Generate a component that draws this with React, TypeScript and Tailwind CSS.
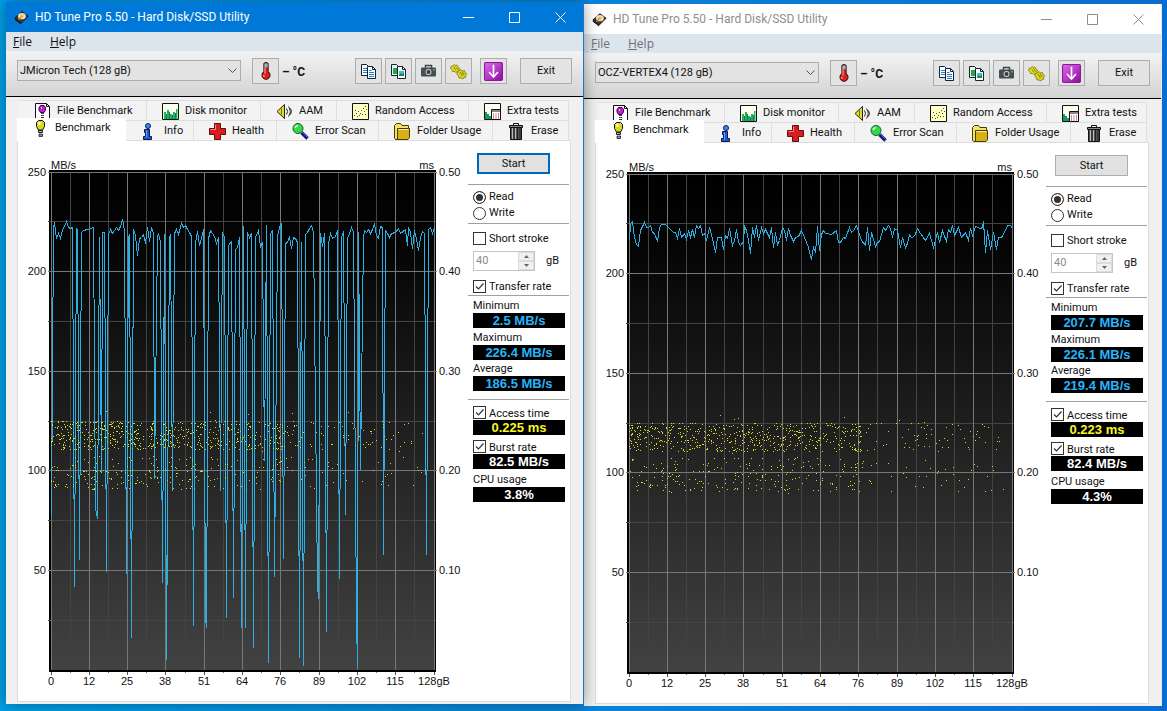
import { useId } from 'react';
import type { ReactNode } from 'react';
import clsx from 'clsx';

type Point = [number, number];

// Plot area in chart units: 384 wide (0-128 gB), 498 high (250-0 MB/s)
const PLOT_W = 384;
const PLOT_H = 498;

const X_LABELS = ['0', '12', '25', '38', '51', '64', '76', '89', '102', '115', '128gB'];
const X_MAJOR = [0, 38, 76, 114, 153, 191, 229, 268, 306, 344, 383];
const X_MINOR = [19, 57, 95, 134, 172, 210, 248, 287, 325, 363];
const Y_LABELS = [
  { y: 0, speed: '250', time: '0.50' },
  { y: 99, speed: '200', time: '0.40' },
  { y: 199, speed: '150', time: '0.30' },
  { y: 298, speed: '100', time: '0.20' },
  { y: 398, speed: '50', time: '0.10' },
];
const Y_MINOR = [49, 149, 249, 348, 448];

const JMICRON_TRACE: Point[] = [
  [0, 344], [2, 56], [3, 50], [5, 66], [7, 61], [9, 66], [11, 57], [13, 54], [15, 49], [17, 55], [19, 56], [21, 55],
  [23, 414], [25, 56], [26, 58], [28, 387], [30, 60], [32, 58], [36, 57], [42, 55], [44, 336], [46, 346], [48, 65],
  [50, 300], [51, 60], [53, 60], [55, 399], [57, 62], [59, 57], [61, 61], [63, 58], [65, 55], [67, 58], [69, 54],
  [71, 47], [73, 58], [75, 401], [77, 65], [78, 62], [80, 465], [82, 57], [84, 63], [86, 83], [88, 66], [90, 65],
  [92, 62], [94, 71], [96, 55], [98, 69], [100, 55], [102, 61], [103, 306], [106, 65], [107, 61], [109, 70],
  [111, 410], [113, 62], [115, 487], [118, 65], [119, 62], [121, 318], [123, 61], [125, 57], [127, 62], [128, 58],
  [130, 51], [132, 55], [134, 53], [136, 57], [138, 60], [140, 64], [142, 453], [144, 70], [146, 59], [148, 73],
  [150, 66], [152, 57], [154, 445], [155, 455], [157, 66], [159, 58], [161, 61], [163, 64], [165, 71], [167, 65],
  [169, 318], [171, 60], [173, 65], [175, 445], [177, 73], [180, 69], [182, 425], [184, 77], [186, 75], [188, 65],
  [190, 455], [192, 54], [194, 455], [196, 60], [198, 65], [200, 61], [202, 475], [204, 65], [207, 58], [209, 74],
  [211, 70], [213, 288], [215, 53], [217, 490], [219, 61], [221, 58], [223, 404], [226, 64], [228, 55], [230, 51],
  [232, 386], [234, 71], [236, 70], [238, 64], [240, 76], [242, 65], [244, 66], [246, 70], [248, 485], [250, 70],
  [252, 493], [254, 62], [256, 60], [258, 56], [260, 53], [262, 60], [266, 413], [267, 426], [269, 61], [271, 74],
  [273, 61], [275, 459], [277, 71], [279, 61], [281, 66], [284, 64], [286, 58], [288, 406], [290, 65], [292, 59],
  [294, 342], [296, 66], [298, 61], [300, 55], [302, 60], [305, 448], [306, 494], [307, 60], [309, 297], [312, 65],
  [313, 58], [315, 60], [317, 57], [319, 61], [321, 57], [323, 51], [325, 63], [327, 66], [329, 54], [331, 55],
  [332, 382], [334, 58], [336, 61], [338, 65], [340, 61], [344, 60], [347, 56], [349, 61], [354, 57], [356, 73],
  [357, 55], [359, 60], [361, 76], [363, 58], [365, 66], [367, 78], [369, 65], [371, 59], [373, 61], [375, 382],
  [377, 57], [379, 55], [381, 61], [383, 55],
];

const VERTEX_TRACE: Point[] = [
  [0, 66], [1, 49], [3, 47], [5, 63], [7, 70], [9, 72], [11, 56], [13, 52], [15, 48], [17, 53], [19, 53], [21, 51],
  [23, 58], [25, 59], [28, 67], [30, 53], [32, 50], [36, 50], [40, 54], [44, 58], [46, 58], [48, 64], [50, 54],
  [52, 63], [55, 59], [57, 65], [59, 56], [61, 63], [63, 55], [65, 63], [67, 51], [69, 54], [71, 51], [73, 61],
  [75, 59], [77, 66], [80, 53], [83, 64], [86, 78], [88, 63], [92, 63], [94, 75], [96, 61], [98, 64], [100, 54],
  [103, 71], [105, 66], [107, 55], [109, 68], [111, 71], [114, 67], [115, 52], [117, 56], [119, 66], [121, 79],
  [123, 53], [125, 63], [127, 51], [129, 66], [132, 53], [134, 59], [136, 55], [138, 59], [140, 63], [142, 53],
  [144, 73], [146, 58], [148, 70], [150, 66], [153, 53], [155, 56], [157, 66], [159, 54], [161, 61], [164, 67],
  [166, 63], [169, 62], [172, 56], [175, 63], [177, 68], [179, 73], [182, 85], [184, 73], [186, 78], [188, 52],
  [190, 76], [192, 60], [194, 56], [196, 59], [202, 60], [207, 56], [209, 68], [211, 68], [214, 63], [216, 64],
  [220, 53], [222, 58], [224, 56], [227, 51], [230, 60], [232, 66], [236, 71], [238, 53], [240, 76], [242, 58],
  [246, 72], [248, 68], [250, 67], [254, 53], [256, 56], [259, 51], [261, 54], [263, 63], [265, 54], [268, 56],
  [271, 73], [273, 63], [276, 73], [278, 69], [280, 60], [282, 63], [285, 62], [288, 54], [291, 59], [296, 66],
  [300, 59], [304, 73], [306, 66], [308, 58], [310, 68], [313, 56], [317, 67], [319, 55], [321, 58], [323, 51],
  [325, 61], [329, 53], [332, 63], [336, 58], [339, 66], [341, 54], [343, 61], [346, 52], [351, 54], [353, 53],
  [354, 47], [356, 78], [358, 56], [361, 75], [364, 58], [367, 75], [369, 63], [372, 63], [375, 58], [378, 51],
  [381, 51], [383, 54],
];

// Access time samples: a dense band above 0.20 ms and a looser one around it
function accessSamples(seed: number): Point[] {
  let state = seed;
  const next = () => {
    state = (state * 48271) % 2147483647;
    return state / 2147483647;
  };
  const column = () => {
    const u = next();
    if (u < 0.76) return Math.floor(Math.pow(u / 0.76, 1.15) * 192);
    if (u < 0.86) return Math.floor(192 + next() * 40);
    return Math.floor(225 + Math.pow(next(), 1.5) * 150);
  };
  const points: Point[] = [];
  for (let i = 0; i < 620; i++) points.push([column(), Math.floor(249 + next() * 29)]);
  for (let i = 0; i < 250; i++) points.push([column(), Math.floor(284 + next() * 34)]);
  for (let i = 0; i < 40; i++) points.push([column(), Math.floor(238 + next() * 82)]);
  return points;
}

const JMICRON_ACCESS = accessSamples(4711);
const VERTEX_ACCESS = accessSamples(90210);

/* ---------- icons ---------- */

function Icon({ children, className = 'size-[17px]' }: { children: ReactNode; className?: string }) {
  return (
    <svg viewBox="0 0 17 17" className={clsx('shrink-0', className)} aria-hidden="true">
      {children}
    </svg>
  );
}

const BulbIcon = () => (
  <Icon>
    <path d="M6.500.5h4l2 2v4l-2 3.500h-4L4.500 6.500v-4z" fill="#d8d820" stroke="#111" />
    <path d="M6.500 2h2v3h-2z" fill="#ffffc0" />
    <path d="M6.500 10.500h4v2h-4z" fill="#b0b0b0" stroke="#222" />
    <path d="M7 14h3.500v2.500H7z" fill="#888" stroke="#222" strokeWidth=".8" />
  </Icon>
);

const FileBenchIcon = () => (
  <Icon>
    <path d="M1.500.5h11l3 3v13h-14z" fill="#fff" stroke="#111" />
    <path d="M12.500.5v3h3" fill="none" stroke="#111" />
    <path d="M6.500 2.500h3.500l1.500 2v2.500l-1.500 2.500H6.500L5 7V4.500z" fill="#c020c8" stroke="#400050" />
    <path d="M7 4h1v2H7z" fill="#f8b0f8" />
    <path d="M7 10.500h3M7 12.500h3" stroke="#444" />
    <path d="M7 14h3v1.500H7z" fill="#333" />
  </Icon>
);

const MonitorIcon = () => (
  <Icon>
    <path d="M.5.5h16v16H.5z" fill="#fbfff0" stroke="#111" />
    <path d="M2 9h2v7H2zM5 7h2v9H5zM8 11h2v5H8zM11 9h2v7h-2zM14 6h1.500v10H14z" fill="#25b34b" />
    <path d="M4 11h1v5H4zM7 9h1v7H7zM10 12h1v4h-1zM13 10h1v6h-1z" fill="#087878" />
  </Icon>
);

const SpeakerIcon = () => (
  <Icon>
    <path d="m1 8.500 7.500-7v14z" fill="#e2dc20" stroke="#222" strokeLinejoin="round" />
    <path d="M5.500 5.500v6" stroke="#777700" />
    <path d="M10.500 5.500q2 3 0 6M12.500 3.500q3.500 5 0 10M14.500 5.500q2 3 0 6" fill="none" stroke="#222" />
  </Icon>
);

const ScatterIcon = () => (
  <Icon>
    <path d="M.5.5h16v16H.5z" fill="#ffffc8" stroke="#111" />
    <path
      d="M2 12h1v1H2zM4 10h1v1H4zM5 13h1v1H5zM6 8h1v1H6zM8 10h1v1H8zM9 7h1v1H9zM10 11h1v1h-1zM11 5h1v1h-1zM12 8h1v1h-1zM13 3h1v1h-1zM14 6h1v1h-1zM7 12h1v1H7zM3 7h1v1H3zM13 11h1v1h-1z"
      fill="#554c00"
    />
  </Icon>
);

const ExtraIcon = () => (
  <Icon>
    <path d="M.5.5h16v16H.5z" fill="#fbfff0" stroke="#111" />
    <path d="M1 9h2v7H1zM3 11h2v5H3zM5 13h2v3H5z" fill="#159a60" />
    <path d="M7.500 6.500h9v10h-9z" fill="#fff" stroke="#111" />
    <path d="M8 7h8v2H8z" fill="#888" />
    <path d="M9 11h1M11.500 11h1M14 11h1M9 13h1M11.500 13h1M14 13h1M9 15h1M11.500 15h1M14 15h1" stroke="#b01030" strokeWidth="1.200" />
  </Icon>
);

const InfoIcon = () => (
  <Icon>
    <circle cx="7" cy="3" r="2.500" fill="#3a8af0" stroke="#0a1a60" />
    <path d="M3.500 6.500h5v7h2v3h-8v-3h2v-4h-1z" fill="#1858d8" stroke="#0a1a50" />
    <path d="M5.500 7.500v7" stroke="#68a8ff" />
  </Icon>
);

const HealthIcon = () => (
  <Icon>
    <path d="M5.500.5h6v5h5v6h-5v5h-6v-5h-5v-6h5z" fill="#d81c20" stroke="#5c1010" />
    <path d="M6.500 1.500v5h-5" fill="none" stroke="#ff8080" />
  </Icon>
);

const ScanIcon = () => (
  <Icon>
    <path d="m9.500 9.500 6 6" stroke="#101870" strokeWidth="3.500" />
    <path d="m10 9 5.500 5.500" stroke="#4860d0" />
    <circle cx="6" cy="5.500" r="5" fill="#35d64c" stroke="#176028" />
    <path d="M3 5q.5-2 3-2.500" fill="none" stroke="#c8ffc8" strokeWidth="1.500" />
  </Icon>
);

const FolderIcon = () => (
  <Icon>
    <path d="M.5 15V2.500l2-2h4l1.500 2h6.500v12l-2 2h-11z" fill="#f5e070" stroke="#443c00" />
    <path d="M3.500 5.500h12v9l-1.500 2h-10.500z" fill="#d8b018" stroke="#443c00" />
    <path d="M4.500 6.500h10" stroke="#fff090" />
  </Icon>
);

const TrashIcon = () => (
  <Icon>
    <path d="M5.500 2V.5h5V2" fill="none" stroke="#111" />
    <path d="M1.500 2.500h13v2h-13z" fill="#888" stroke="#111" />
    <path d="M2.500 4.500h11v12h-11z" fill="#555" stroke="#111" />
    <path d="M4.500 5v11M7.500 5v11" stroke="#bbb" />
    <path d="M6 5v11M9.500 5v11M12 5v11" stroke="#222" />
  </Icon>
);

const ThermometerIcon = () => (
  <Icon className="size-[18px]">
    <path d="M6.500 1.500q2-2 4 0v8q2.500 1.500 1.500 4.500-1.500 2.500-3.500 2.500T5 14q-1-3 1.500-4.500z" fill="#d82020" stroke="#501010" />
    <path d="M7 1.500h3V5H7z" fill="#60d0d8" />
    <path d="M7.500 5v6" stroke="#ff9a9a" />
    <path d="M6.500 12.500v1.500" stroke="#fff" />
  </Icon>
);

const CopyTextIcon = () => (
  <Icon>
    <path d="M1.500 1.500h5l2 2v9h-7z" fill="#fff" stroke="#123" />
    <path d="M3 5.500h4M3 7.500h4M3 9.500h4" stroke="#2080d8" />
    <path d="M7.500 3.500h5l3 3v9h-8z" fill="#fff" stroke="#123" />
    <path d="M12.500 3.500v3h3" fill="none" stroke="#123" />
    <path d="M9 7.500h2.500M9 9.500h5M9 11.500h5M9 13.500h5" stroke="#2080d8" />
  </Icon>
);

const CopyImageIcon = () => (
  <Icon>
    <path d="M1.500 1.500h5l2 2v9h-7z" fill="#e8f4ff" stroke="#123" />
    <path d="M3 5h4v6H3z" fill="#28a838" />
    <path d="M7.500 3.500h5l3 3v9h-8z" fill="#fff" stroke="#123" />
    <path d="M12.500 3.500v3h3" fill="none" stroke="#123" />
    <path d="M9 8h5v5H9z" fill="#48b4f0" />
    <path d="m9 13 1.500-3 1.500 1.500 2-2V13z" fill="#189028" />
  </Icon>
);

const CameraIcon = () => (
  <Icon>
    <path d="M5.500 5V2.500h6V5" fill="none" stroke="#444" strokeWidth="1.500" />
    <path d="M2 4.500h13q1 0 1 1v7q0 1-1 1H2q-1 0-1-1v-7q0-1 1-1z" fill="#484c50" />
    <circle cx="8.500" cy="9" r="3" fill="#c8d0d0" />
    <circle cx="8.500" cy="9" r="2" fill="#333c40" />
    <path d="M13 6h2v1.500h-2z" fill="#30b880" />
  </Icon>
);

const GearsIcon = () => (
  <Icon>
    <path
      d="M1 3.500 3 3l1-1.500 1.500 1L7 2l1 2 1.500 1L9 6.500l.5 1.500-2 .500L6 9.500l-1.500-1H2.500L2 6.500.5 5.500z"
      fill="#e2de28"
      stroke="#7c7800"
      strokeWidth=".8"
    />
    <path
      d="m7.500 8.500 2-1L11 6.500l1.500 1.500 2-.5.500 2 1.500 1-1 2 .5 1.500-2 .500-1 1.500-2-1-2 0-.5-2-1.500-1.500z"
      fill="#d6d224"
      stroke="#7c7800"
      strokeWidth=".8"
    />
    <path d="m3.500 4 2.500 3.500M5.500 3.500l2.500 3.500M10 9l2.500 4M12 8.500l2 3.500" stroke="#8a8400" />
  </Icon>
);

function DownArrowIcon() {
  const id = useId();
  return (
    <Icon className="size-[19px]">
      <defs>
        <linearGradient id={id} x1="0" y1="0" x2="1" y2="1">
          <stop offset="0" stopColor="#e06af0" />
          <stop offset="1" stopColor="#8c0c9c" />
        </linearGradient>
      </defs>
      <rect x=".5" y=".5" width="16" height="16" rx="1" fill={`url(#${id})`} stroke="#8a1898" />
      <path d="M8.500 2.500v10" stroke="#fff" strokeWidth="1.500" />
      <path d="m4.500 9 4 4.500 4-4.500" fill="none" stroke="#fff" strokeWidth="1.500" />
    </Icon>
  );
}

const DiskIcon = () => (
  <Icon className="size-[15px]">
    <path d="M1 9 9 2l7 5-8 8z" fill="#3c3430" stroke="#181410" />
    <path d="m1 9 7 6v1.500L1 11z" fill="#181410" />
    <ellipse cx="9" cy="7" rx="4.500" ry="3.500" fill="#f0d8a8" />
    <circle cx="9" cy="7" r="1" fill="#b09060" />
    <path d="m5 11 3-3" stroke="#e08030" strokeWidth="1.500" />
  </Icon>
);

/* ---------- chart ---------- */

function BenchmarkChart({ trace, samples }: { trace: Point[]; samples: Point[] }) {
  const fillId = useId();
  return (
    <svg
      viewBox="0 0 450 560"
      className="block w-full font-['Liberation_Sans',Arial,sans-serif] text-[11px]"
      role="img"
      aria-label="Transfer rate and access time"
    >
      <defs>
        <linearGradient id={fillId} x1="0" y1="0" x2="0" y2="1">
          <stop offset="0" stopColor="#000" />
          <stop offset=".15" stopColor="#050505" />
          <stop offset="1" stopColor="#424242" />
        </linearGradient>
      </defs>
      <g transform="translate(33 31)">
        <g shapeRendering="crispEdges">
          <rect x="-2" y="-2" width={PLOT_W + 3} height={PLOT_H + 4} fill="#000" />
          <rect width={PLOT_W} height={PLOT_H} fill={`url(#${fillId})`} />
          {X_MINOR.map((x) => (
            <rect key={x} x={x} width="1" height={PLOT_H - 30} fill="#444" />
          ))}
          {Y_MINOR.map((y) => (
            <rect key={y} x="-3" y={y} width={PLOT_W + 4} height="1" fill="#444" />
          ))}
          {X_MAJOR.map((x) => (
            <rect key={x} x={x} width="1" height={PLOT_H} fill="#777" />
          ))}
          {Y_LABELS.map(({ y }) => (
            <rect key={y} x="-3" y={y} width={PLOT_W + 5} height="1" fill="#777" />
          ))}
          {X_MAJOR.map((x) => (
            <rect key={x} x={x} y={PLOT_H + 2} width="1" height="3" fill="#555" />
          ))}
          {X_MINOR.map((x) => (
            <rect key={x} x={x} y={PLOT_H + 2} width="1" height="1" fill="#777" />
          ))}
          <path d={'M' + trace.map(([x, y]) => `${x + 0.5} ${y + 0.5}`).join('L')} fill="none" stroke="#2cb0e4" />
          <path d={samples.map(([x, y]) => `M${x} ${y}h1v1h-1z`).join('')} fill="#d6da28" />
        </g>
        <g fill="#111">
          <text x="0" y="-3">MB/s</text>
          <text x="383" y="-3" textAnchor="end">ms</text>
          {Y_LABELS.map(({ y, speed, time }) => (
            <g key={y}>
              <text x="-5" y={y + 4} textAnchor="end">{speed}</text>
              <text x="388" y={y + 4}>{time}</text>
            </g>
          ))}
          {X_LABELS.map((label, i) => (
            <text key={label} x={X_MAJOR[i]} y="513" textAnchor="middle">{label}</text>
          ))}
        </g>
      </g>
    </svg>
  );
}

/* ---------- controls ---------- */

function ToolButton({ label, className, children }: { label: string; className?: string; children: ReactNode }) {
  return (
    <button
      type="button"
      aria-label={label}
      className={clsx('flex h-[26px] w-[27px] shrink-0 items-center justify-center border border-[#adadad] bg-[#e3e3e3]', className)}
    >
      {children}
    </button>
  );
}

function CheckRow({ label, checked = false, className }: { label: string; checked?: boolean; className?: string }) {
  return (
    <label className={clsx('flex h-[15px] items-center gap-[3px]', className)}>
      <span className="grid size-[13px]">
        <input
          type="checkbox"
          defaultChecked={checked}
          className="peer col-start-1 row-start-1 size-[13px] appearance-none border border-[#333] bg-white"
        />
        <svg viewBox="0 0 13 13" className="pointer-events-none invisible col-start-1 row-start-1 peer-checked:visible" aria-hidden="true">
          <path d="m3 6.500 2.500 2.500L10.500 3.500" fill="none" stroke="#333" strokeWidth="1.200" />
        </svg>
      </span>
      <span className="pt-px">{label}</span>
    </label>
  );
}

function RadioRow({ label, name, checked = false }: { label: string; name: string; checked?: boolean }) {
  return (
    <label className="flex h-4 items-center gap-[3px]">
      <input
        type="radio"
        name={name}
        defaultChecked={checked}
        className="size-[13px] appearance-none rounded-full border border-[#333] bg-white checked:bg-[#333] checked:shadow-[inset_0_0_0_2px_white]"
      />
      <span className="pt-px">{label}</span>
    </label>
  );
}

function Readout({ value, color }: { value: string; color: string }) {
  return (
    <output
      className={clsx(
        "block h-[15px] bg-black text-center font-['Liberation_Sans',Arial,sans-serif] text-[13px] leading-[15px] font-bold",
        color,
      )}
    >
      {value}
    </output>
  );
}

function Tab({ icon, label, width, selected = false }: { icon: ReactNode; label: string; width: string; selected?: boolean }) {
  return (
    <button
      type="button"
      role="tab"
      aria-selected={selected}
      className={clsx(
        'flex items-center gap-1.5 pl-[15px] whitespace-nowrap',
        width,
        selected ? 'z-10 -mt-0.5 -mb-px h-[23px] bg-white pb-0.5' : 'h-5 border-t border-r border-[#dedede] bg-[#f3f3f3] pt-px',
      )}
    >
      {icon}
      {label}
    </button>
  );
}

interface Results {
  minimum: string;
  maximum: string;
  average: string;
  access: string;
  burst: string;
  cpu: string;
}

interface WindowProps {
  device: string;
  active?: boolean;
  results: Results;
  trace: Point[];
  samples: Point[];
}

function HdTuneWindow({ device, active = false, results, trace, samples }: WindowProps) {
  const name = useId();
  return (
    <section
      className={clsx(
        "flex flex-col border-r bg-[#f0f0f0] font-[Roboto,'Liberation_Sans',sans-serif] text-[11px] text-[#111]",
        active ? 'z-10 border-[#1b78c2] shadow-[0_0_14px_rgba(0,0,0,0.4)]' : 'mt-0.5 border-[#e8e8e8]',
      )}
    >
      <header
        className={clsx(
          'flex h-[30px] items-center pl-2 text-xs',
          active ? 'bg-[#0078d7] text-white' : 'bg-white text-[#8e8e8e]',
        )}
      >
        <DiskIcon />
        <h1 className="ml-1.5 flex-1 whitespace-nowrap">HD Tune Pro 5.50 - Hard Disk/SSD Utility</h1>
        <button type="button" aria-label="Minimize" className="grid h-full w-[46px] place-items-center">
          <svg viewBox="0 0 11 11" className="size-[11px]" fill="none" stroke="currentColor">
            <path d="M0 5.500h11" />
          </svg>
        </button>
        <button type="button" aria-label="Maximize" className="grid h-full w-[46px] place-items-center">
          <svg viewBox="0 0 11 11" className="size-[11px]" fill="none" stroke="currentColor">
            <path d="M.5.5h10v10H.5z" />
          </svg>
        </button>
        <button type="button" aria-label="Close" className="grid h-full w-[46px] place-items-center">
          <svg viewBox="0 0 11 11" className="size-[11px]" fill="none" stroke="currentColor">
            <path d="m.5.5 10 10m0-10-10 10" />
          </svg>
        </button>
      </header>

      <nav
        className={clsx(
          "flex h-[19px] items-center gap-[18px] bg-[#dce4ec] pl-[7px] font-['Open_Sans',sans-serif] text-xs",
          active ? 'text-[#111]' : 'text-[#6c7176]',
        )}
      >
        <button type="button"><u>F</u>ile</button>
        <button type="button"><u>H</u>elp</button>
      </nav>

      <div className="flex h-[46px] items-start border-b border-black bg-linear-to-b from-[#f3f3f3] to-[#d4d4d4] pt-[7px] pr-[11px] pl-[11px]">
        <div className="mt-0.5 grid w-56 items-center">
          <select
            aria-label="Drive"
            defaultValue={device}
            className="col-start-1 row-start-1 h-[21px] appearance-none border border-[#adadad] bg-[#e3e3e3] pt-0.5 pl-0.5"
          >
            <option>{device}</option>
          </select>
          <svg viewBox="0 0 9 5" className="pointer-events-none col-start-1 row-start-1 mr-1 h-[5px] w-[9px] justify-self-end" aria-hidden="true">
            <path d="m.5.5 4 4 4-4" fill="none" stroke="#555" />
          </svg>
        </div>
        <ToolButton label="Temperature" className="ml-[11px]"><ThermometerIcon /></ToolButton>
        <span className="ml-[3px] pt-px text-xs leading-[26px] font-bold">– °C</span>
        <div className="ml-auto flex gap-[3px]">
          <ToolButton label="Copy text"><CopyTextIcon /></ToolButton>
          <ToolButton label="Copy screenshot"><CopyImageIcon /></ToolButton>
          <ToolButton label="Save screenshot"><CameraIcon /></ToolButton>
          <ToolButton label="Options"><GearsIcon /></ToolButton>
        </div>
        <ToolButton label="Minimize to tray" className="ml-2"><DownArrowIcon /></ToolButton>
        <button type="button" className="ml-[13px] h-[26px] w-[52px] shrink-0 border border-[#adadad] bg-[#e3e3e3] pt-px">
          Exit
        </button>
      </div>

      <div className="flex flex-1 flex-col pt-[3px] pr-3 pb-0.5 pl-[11px]">
        <div role="tablist">
          <div className="ml-0.5 flex">
            <Tab icon={<FileBenchIcon />} label="File Benchmark" width="w-32" />
            <Tab icon={<MonitorIcon />} label="Disk monitor" width="w-[114px]" />
            <Tab icon={<SpeakerIcon />} label="AAM" width="w-[76px]" />
            <Tab icon={<ScatterIcon />} label="Random Access" width="w-[132px]" />
            <Tab icon={<ExtraIcon />} label="Extra tests" width="w-[100px]" />
          </div>
          <div className="flex">
            <Tab icon={<BulbIcon />} label="Benchmark" width="w-[109px]" selected />
            <Tab icon={<InfoIcon />} label="Info" width="w-[68px]" />
            <Tab icon={<HealthIcon />} label="Health" width="w-[83px]" />
            <Tab icon={<ScanIcon />} label="Error Scan" width="w-[102px]" />
            <Tab icon={<FolderIcon />} label="Folder Usage" width="w-[114px]" />
            <Tab icon={<TrashIcon />} label="Erase" width="w-[76px]" />
          </div>
        </div>

        <div role="tabpanel" className="flex flex-1 border border-[#dcdcdc] bg-white">
          <div className="min-w-0 flex-1">
            <BenchmarkChart trace={trace} samples={samples} />
          </div>

          <aside className="w-[102px] shrink-0 pr-px">
            <div className="pt-3 pb-2.5 pl-[9px]">
              <button
                type="button"
                className={clsx(
                  'block h-[21px] w-[73px] bg-[#e1e1e1] pt-px',
                  active ? 'border-2 border-[#0067b8]' : 'border border-[#adadad]',
                )}
              >
                Start
              </button>
            </div>

            <div className="border-t border-[#a0a0a0] pt-1 pb-0.5 pl-[5px]">
              <RadioRow label="Read" name={name} checked />
              <RadioRow label="Write" name={name} />
            </div>

            <div className="border-t border-[#a0a0a0] pt-[7px] pl-[5px]">
              <CheckRow label="Short stroke" />
              <div className="mt-[5px] flex items-center">
                <div className="flex h-5 w-[62px] border border-[#c4c4c4] bg-white">
                  <input
                    type="text"
                    aria-label="Short stroke size"
                    defaultValue="40"
                    disabled
                    className="w-full min-w-0 pl-0.5 text-[#8a8a8a]"
                  />
                  <div className="flex w-4 shrink-0 flex-col bg-[#f0f0f0] text-[#666]">
                    <button type="button" disabled aria-label="Increase" className="grid flex-1 place-items-center border border-[#dcdcdc]">
                      <svg viewBox="0 0 5 3" className="h-[3px] w-[5px]" fill="currentColor"><path d="M0 3 2.500 0 5 3z" /></svg>
                    </button>
                    <button type="button" disabled aria-label="Decrease" className="grid flex-1 place-items-center border border-[#dcdcdc]">
                      <svg viewBox="0 0 5 3" className="h-[3px] w-[5px]" fill="currentColor"><path d="m0 0 2.500 3L5 0z" /></svg>
                    </button>
                  </div>
                </div>
                <span className="ml-[11px] pt-px">gB</span>
              </div>
              <CheckRow label="Transfer rate" checked className="mt-2 mb-px" />
            </div>

            <div className="border-t border-[#a0a0a0] pt-0.5 pr-1 pb-2 pl-[5px] leading-[15px]">
              <p>Minimum</p>
              <Readout value={results.minimum} color="text-[#28b4f8]" />
              <p className="mt-0.5">Maximum</p>
              <Readout value={results.maximum} color="text-[#28b4f8]" />
              <p className="mt-px">Average</p>
              <Readout value={results.average} color="text-[#28b4f8]" />
            </div>

            <div className="border-t border-[#a0a0a0] pt-[5px] pr-1 pl-[5px] leading-[15px]">
              <CheckRow label="Access time" checked />
              <Readout value={results.access} color="text-[#f8f820]" />
              <CheckRow label="Burst rate" checked className="mt-1" />
              <Readout value={results.burst} color="text-white" />
              <p className="mt-[3px]">CPU usage</p>
              <Readout value={results.cpu} color="text-white" />
            </div>
          </aside>
        </div>
      </div>
    </section>
  );
}

export default function App() {
  return (
    <main className="min-h-screen bg-linear-to-r from-[#00a0e8] via-[#0a84d8] to-[#0a6cd0]">
      <div className="grid grid-cols-2 items-start pt-0.5 pr-[5px] pl-1.5">
        <HdTuneWindow
          active
          device="JMicron Tech (128 gB)"
          trace={JMICRON_TRACE}
          samples={JMICRON_ACCESS}
          results={{
            minimum: '2.5 MB/s',
            maximum: '226.4 MB/s',
            average: '186.5 MB/s',
            access: '0.225 ms',
            burst: '82.5 MB/s',
            cpu: '3.8%',
          }}
        />
        <HdTuneWindow
          device="OCZ-VERTEX4 (128 gB)"
          trace={VERTEX_TRACE}
          samples={VERTEX_ACCESS}
          results={{
            minimum: '207.7 MB/s',
            maximum: '226.1 MB/s',
            average: '219.4 MB/s',
            access: '0.223 ms',
            burst: '82.4 MB/s',
            cpu: '4.3%',
          }}
        />
      </div>
    </main>
  );
}
